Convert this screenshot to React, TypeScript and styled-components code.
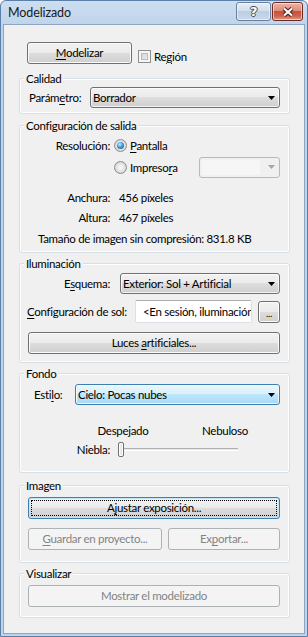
import styled, { createGlobalStyle } from "styled-components";

const GlobalStyle = createGlobalStyle`
  html, body {
    margin: 0;
    padding: 0;
    background: #ffffff;
  }
  body {
    font-family: Lato, "Liberation Sans", sans-serif;
    font-size: 11.5px;
    letter-spacing: -0.3px;
    color: #000;
  }
  * {
    box-sizing: border-box;
  }
`;

const Window = styled.div`
  width: 308px;
  height: 637px;
  display: flex;
  flex-direction: column;
  border: 1px solid #5a7fa9;
  border-radius: 6px 6px 0 0;
  background: linear-gradient(#cddef0, #bfd4eb 24px, #bfd4eb);
  overflow: hidden;
`;

const TitleBar = styled.div`
  height: 23px;
  display: flex;
  align-items: flex-start;
  padding-left: 7px;
`;

const Title = styled.span`
  flex: 1;
  margin-top: 4px;
  font-size: 12.5px;
  letter-spacing: -0.1px;
  line-height: 16px;
  color: #1a1a1a;
`;

const CaptionButtons = styled.div`
  display: flex;
  gap: 1px;
  margin: 1px 4px 0 0;
`;

const CaptionButton = styled.div<{ $kind: "help" | "close" }>`
  width: ${(p) => (p.$kind === "help" ? 35 : 31)}px;
  height: 19px;
  border-radius: 3px;
  display: flex;
  align-items: center;
  justify-content: center;
  border: 1px solid ${(p) => (p.$kind === "help" ? "#6b7f99" : "#6e2b21")};
  background: ${(p) =>
    p.$kind === "help"
      ? "linear-gradient(#e6eef8, #d3dfee 45%, #bccde2 50%, #c9d9ec)"
      : "linear-gradient(#ecb3a5, #de8d7a 45%, #c8523b 50%, #cd6049 75%, #e29b86)"};
  box-shadow: inset 0 0 0 1px rgba(255, 255, 255, 0.55);
`;

const HelpGlyph = styled.span`
  font-family: "DejaVu Sans", sans-serif;
  font-weight: bold;
  font-size: 13px;
  line-height: 13px;
  color: #ffffff;
  text-shadow: 1px 0 0 #3b4a60, -1px 0 0 #3b4a60, 0 1px 0 #3b4a60,
    0 -1px 0 #3b4a60;
`;

const Frame = styled.div`
  flex: 1;
  display: flex;
  min-height: 0;
  padding: 0 2px 2px 2px;
`;

const Client = styled.div`
  flex: 1;
  min-width: 0;
  display: flex;
  flex-direction: column;
  background: #f0f0f0;
  border: 1px solid #8ea5c2;
  padding: 17px 14px 0 15px;
`;

const TopRow = styled.div`
  display: flex;
  align-items: flex-end;
  height: 22px;
`;

const Button = styled.button<{
  $w?: number;
  $ml?: number;
  $state?: "normal" | "default" | "disabled";
}>`
  position: relative;
  flex: ${(p) => (p.$w ? "none" : "1")};
  width: ${(p) => (p.$w ? `${p.$w}px` : "auto")};
  min-width: 0;
  height: 22px;
  margin: 0 0 0 ${(p) => p.$ml ?? 0}px;
  padding: 0;
  font: inherit;
  letter-spacing: inherit;
  line-height: 14px;
  border-radius: 3px;
  display: flex;
  align-items: center;
  justify-content: center;
  border: 1px solid
    ${(p) =>
      p.$state === "disabled"
        ? "#adb2b5"
        : p.$state === "default"
        ? "#3c7fb1"
        : "#707070"};
  color: ${(p) => (p.$state === "disabled" ? "#838383" : "#000")};
  background: ${(p) =>
    p.$state === "disabled"
      ? "#f4f4f4"
      : "linear-gradient(#f2f2f2, #ebebeb 49%, #dddddd 50%, #cfcfcf)"};
  box-shadow: ${(p) =>
    p.$state === "disabled"
      ? "none"
      : p.$state === "default"
      ? "inset 0 0 0 1px #c4e5f8"
      : "inset 0 0 0 1px #fbfbfb"};

  &::after {
    content: "";
    display: ${(p) => (p.$state === "default" ? "block" : "none")};
    position: absolute;
    inset: 2px;
    border: 1px dotted #000;
  }
`;

const U = styled.span`
  text-decoration: underline;
  text-underline-offset: 2px;
`;

const CheckLabel = styled.label`
  display: flex;
  align-items: center;
  margin: 0 0 1px 6px;
  height: 14px;
  gap: 3px;
`;

const CheckBox = styled.span`
  width: 13px;
  height: 13px;
  border: 1px solid #8e8f8f;
  background: linear-gradient(135deg, #c6cad0, #f6f6f6);
  box-shadow: inset 0 0 0 2px #f4f4f4, inset 0 0 0 3px #b9bdc2;
`;

const Group = styled.fieldset<{ $mt: number; $pb: number }>`
  margin: ${(p) => p.$mt}px 0 0 0;
  padding: 0 9px ${(p) => p.$pb}px 0;
  min-width: 0;
  display: flex;
  flex-direction: column;
  border: 1px solid #d5dfe5;
  border-radius: 3px;
  box-shadow: inset 0 0 0 1px #ffffff;
`;

const Legend = styled.legend`
  margin-left: 4px;
  padding: 0 2px;
  height: 15px;
  line-height: 15px;
  background: #f0f0f0;
`;

const Row = styled.div<{ $mt?: number; $h?: number; $pl?: number }>`
  display: flex;
  align-items: center;
  min-width: 0;
  margin-top: ${(p) => p.$mt ?? 0}px;
  height: ${(p) => p.$h ?? 22}px;
  padding-left: ${(p) => p.$pl ?? 0}px;
  white-space: nowrap;
`;

const Label = styled.span<{ $w: number; $pl?: number; $right?: boolean }>`
  flex: none;
  width: ${(p) => p.$w}px;
  padding-left: ${(p) => p.$pl ?? 0}px;
  text-align: ${(p) => (p.$right ? "right" : "left")};
`;

const Text = styled.span<{ $ml?: number }>`
  margin-left: ${(p) => p.$ml ?? 0}px;
`;

const Caption = styled.span<{ $ml?: number }>`
  width: 100px;
  margin-left: ${(p) => p.$ml ?? 0}px;
  text-align: center;
`;

const Select = styled.div<{
  $w?: number;
  $ml?: number;
  $state?: "normal" | "focused" | "disabled";
}>`
  flex: ${(p) => (p.$w ? "none" : "1")};
  width: ${(p) => (p.$w ? `${p.$w}px` : "auto")};
  min-width: 0;
  margin-left: ${(p) => (p.$ml === undefined ? "auto" : `${p.$ml}px`)};
  height: 21px;
  display: flex;
  align-items: center;
  padding: 0 4px 0 2px;
  border-radius: 3px;
  border: 1px solid
    ${(p) =>
      p.$state === "focused"
        ? "#3c7fb1"
        : p.$state === "disabled"
        ? "#b7babc"
        : "#707070"};
  background: ${(p) =>
    p.$state === "focused"
      ? "linear-gradient(#eaf6fd, #d9f0fc 49%, #bee6fd 50%, #a7d9f5)"
      : p.$state === "disabled"
      ? "#f0f0f0"
      : "linear-gradient(#f2f2f2, #ebebeb 49%, #dddddd 50%, #cfcfcf)"};
  box-shadow: ${(p) =>
    p.$state === "disabled" ? "none" : "inset 0 0 0 1px rgba(255,255,255,0.75)"};
`;

const SelectValue = styled.span`
  flex: 1;
  min-width: 0;
  overflow: hidden;
`;

const DisabledField = styled.span`
  flex: 1;
  align-self: stretch;
  margin: 2px 8px 2px 0;
  background: #f6f6f6;
`;

const TextBox = styled.div`
  flex: 1;
  min-width: 0;
  height: 23px;
  display: flex;
  align-items: center;
  padding-left: 7px;
  overflow: hidden;
  background: #ffffff;
  border: 1px solid #dbdfe6;
  border-top-color: #abadb3;
  border-radius: 2px;
`;

const Dots = styled.span`
  font-size: 10px;
  margin-top: 3px;
`;

const SliderBox = styled.div`
  position: relative;
  width: 120px;
  height: 17px;
  margin-left: 8px;
`;

const SliderTrack = styled.div`
  position: absolute;
  left: 0;
  right: 0;
  top: 7px;
  height: 3px;
  border-top: 1px solid #b0b0b0;
  border-bottom: 1px solid #ffffff;
  background: #e7eaea;
`;

const SliderThumb = styled.div`
  position: absolute;
  left: 0;
  top: 1px;
  width: 6px;
  height: 15px;
  border: 1px solid #707070;
  border-radius: 2px;
  background: linear-gradient(90deg, #f6f6f6, #dcdcdc);
  box-shadow: inset 0 0 0 1px #ffffff;
`;

const Radio = styled.span<{ $checked?: boolean; $ml?: number }>`
  flex: none;
  width: 13px;
  height: 13px;
  margin-left: ${(p) => p.$ml ?? 0}px;
  border-radius: 50%;
  border: 1px solid #8d8d8d;
  background: radial-gradient(circle at 50% 50%, #fbfbfb 0, #e3e3e3 50%, #c4c4c4 100%);
  display: flex;
  align-items: center;
  justify-content: center;

  &::after {
    content: "";
    display: ${(p) => (p.$checked ? "block" : "none")};
    width: 7px;
    height: 7px;
    border-radius: 50%;
    background: radial-gradient(circle at 40% 35%, #d0f0ff 0, #3d9bd6 45%, #1b4e78 100%);
  }
`;

function Arrow({ color = "#000" }: { color?: string }) {
  return (
    <svg width="7" height="4" viewBox="0 0 7 4">
      <path d="M0 0h7L3.5 4z" fill={color} />
    </svg>
  );
}

function CloseIcon() {
  return (
    <svg width="14" height="12" viewBox="0 0 14 12">
      <path d="M3 2.5L11 9.5M11 2.5L3 9.5" stroke="#4a1a12" strokeWidth="4.2" />
      <path d="M3 2.5L11 9.5M11 2.5L3 9.5" stroke="#ffffff" strokeWidth="2.2" />
    </svg>
  );
}

export default function App() {
  return (
    <>
      <GlobalStyle />
      <Window>
        <TitleBar>
          <Title>Modelizado</Title>
          <CaptionButtons>
            <CaptionButton $kind="help">
              <HelpGlyph>?</HelpGlyph>
            </CaptionButton>
            <CaptionButton $kind="close">
              <CloseIcon />
            </CaptionButton>
          </CaptionButtons>
        </TitleBar>
        <Frame>
          <Client>
            <TopRow>
              <Button $w={105} $ml={8}>
                <span>
                  <U>M</U>odelizar
                </span>
              </Button>
              <CheckLabel>
                <CheckBox />
                <span>
                  Re<U>g</U>ión
                </span>
              </CheckLabel>
            </TopRow>

            <Group $mt={7} $pb={5}>
              <Legend>Calidad</Legend>
              <Row $mt={1} $h={21}>
                <Label $w={70} $pl={9}>
                  Parám<U>e</U>tro:
                </Label>
                <Select $ml={0}>
                  <SelectValue>Borrador</SelectValue>
                  <Arrow />
                </Select>
              </Row>
            </Group>

            <Group $mt={4} $pb={4}>
              <Legend>Configuración de salida</Legend>
              <Row $mt={1}>
                <Label $w={90} $right>
                  Resolución:
                </Label>
                <Radio $checked $ml={4} />
                <Text $ml={3}>
                  <U>P</U>antalla
                </Text>
              </Row>
              <Row>
                <Label $w={90} />
                <Radio $ml={4} />
                <Text $ml={3}>
                  Impreso<U>r</U>a
                </Text>
                <Select $w={81} $state="disabled">
                  <DisabledField />
                  <Arrow color="#a6a6a6" />
                </Select>
              </Row>
              <Row $mt={9} $h={20}>
                <Label $w={90} $right>
                  Anchura:
                </Label>
                <Text $ml={9}>456 píxeles</Text>
              </Row>
              <Row $h={20}>
                <Label $w={90} $right>
                  Altura:
                </Label>
                <Text $ml={9}>467 píxeles</Text>
              </Row>
              <Row $mt={1} $h={20} $pl={18}>
                Tamaño de imagen sin compresión: 831.8 KB
              </Row>
            </Group>

            <Group $mt={3} $pb={8}>
              <Legend>Iluminación</Legend>
              <Row $mt={2} $h={21}>
                <Label $w={90} $right>
                  E<U>s</U>quema:
                </Label>
                <Select $ml={10}>
                  <SelectValue>Exterior: Sol + Artificial</SelectValue>
                  <Arrow />
                </Select>
              </Row>
              <Row $mt={6} $h={23}>
                <Label $w={115} $pl={7}>
                  <U>C</U>onfiguración de sol:
                </Label>
                <TextBox>&lt;En sesión, iluminación natural&gt;</TextBox>
                <Button $w={22} $ml={6}>
                  <Dots>...</Dots>
                </Button>
              </Row>
              <Row $mt={9}>
                <Button $ml={8}>
                  <span>
                    Luces <U>a</U>rtificiales...
                  </span>
                </Button>
              </Row>
            </Group>

            <Group $mt={3} $pb={14}>
              <Legend>Fondo</Legend>
              <Row $mt={3} $h={21}>
                <Label $w={55} $pl={14}>
                  Esti<U>l</U>o:
                </Label>
                <Select $ml={0} $state="focused">
                  <SelectValue>Cielo: Pocas nubes</SelectValue>
                  <Arrow />
                </Select>
              </Row>
              <Row $mt={17} $h={16} $pl={53}>
                <Caption>Despejado</Caption>
                <Caption $ml={2}>Nebuloso</Caption>
              </Row>
              <Row $mt={3} $h={17}>
                <Label $w={90} $right>
                  Niebla:
                </Label>
                <SliderBox>
                  <SliderTrack />
                  <SliderThumb />
                </SliderBox>
              </Row>
            </Group>

            <Group $mt={5} $pb={12}>
              <Legend>Imagen</Legend>
              <Row $mt={4}>
                <Button $ml={8} $state="default">
                  <span>
                    A<U>j</U>ustar exposición...
                  </span>
                </Button>
              </Row>
              <Row $mt={9}>
                <Button $w={134} $ml={8} $state="disabled">
                  <span>
                    <U>G</U>uardar en proyecto...
                  </span>
                </Button>
                <Button $w={112} $ml={6} $state="disabled">
                  <span>
                    Ex<U>p</U>ortar...
                  </span>
                </Button>
              </Row>
            </Group>

            <Group $mt={3} $pb={10}>
              <Legend>Visualizar</Legend>
              <Row $mt={4}>
                <Button $ml={8} $state="disabled">
                  <span>Mostrar el modelizado</span>
                </Button>
              </Row>
            </Group>
          </Client>
        </Frame>
      </Window>
    </>
  );
}
